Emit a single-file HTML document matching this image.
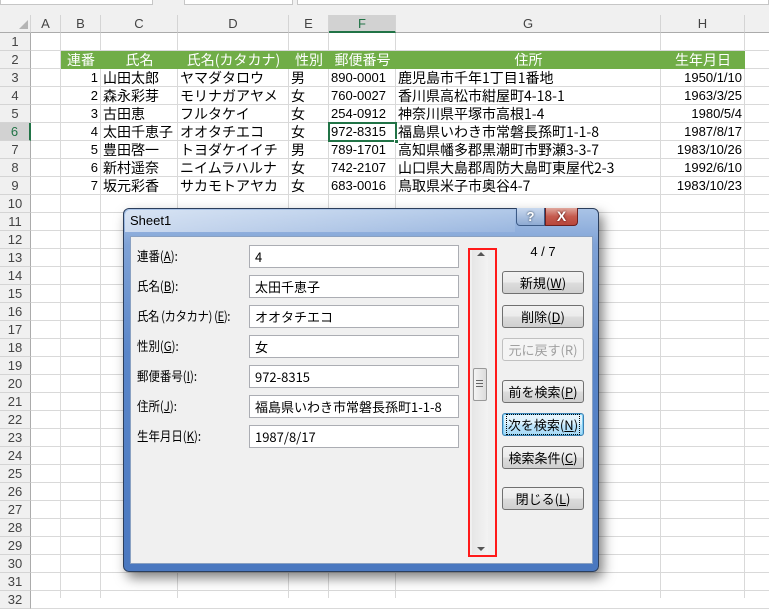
<!DOCTYPE html>
<html><head><meta charset="utf-8"><style>
*{box-sizing:border-box;margin:0;padding:0}
body{width:769px;height:598px;overflow:hidden;background:#fff;position:relative;font-family:"Liberation Sans","Noto Sans CJK JP",sans-serif;}
.a{position:absolute}
.top{left:0;top:0;width:769px;height:15px;background:#f0f0f0}
.hdr{top:15px;height:18px;background:#f0f0f0;border-right:1px solid #d4d4d4;border-bottom:1px solid #ababab;font-size:13px;color:#444;text-align:center;line-height:18px}
.rh{left:0;width:31px;height:18px;background:#f0f0f0;border-bottom:1px solid #d4d4d4;border-right:1px solid #ababab;font-size:13px;color:#444;text-align:center;line-height:18px}
.vl{top:33px;width:1px;height:565px;background:#d9d9d9}
.hl{left:31px;width:738px;height:1px;background:#d9d9d9}
.c{height:18px;font-size:14px;line-height:18px;white-space:nowrap;color:#000;font-family:"Noto Sans CJK JP","Liberation Sans",sans-serif}
.g{background:#70ad47;color:#fff;text-align:center}
.d{font-size:13px;font-family:"Liberation Sans","Noto Sans CJK JP",sans-serif}
.lab{left:137px;font-size:13px;font-family:"Noto Sans CJK JP",sans-serif;color:#000;line-height:22px;white-space:nowrap;transform:scaleX(0.88);transform-origin:left center}
.in{left:249px;width:210px;height:23px;background:#fff;border:1px solid #abadb3;font-size:13px;padding-left:5px;line-height:21px;font-family:"Noto Sans CJK JP",sans-serif;white-space:nowrap}
.b{left:502px;width:82px;height:23px;border:1px solid #707070;border-radius:3px;background:linear-gradient(#f2f2f2,#ebebeb 50%,#dddddd 51%,#cfcfcf);font-size:13px;text-align:center;line-height:21px;font-family:"Noto Sans CJK JP",sans-serif;color:#000}
u{text-decoration:underline}
</style></head><body>
<div class="a top"></div>
<div class="a" style="left:0;top:0;width:153px;height:5px;border:1px solid #c6c6c6;border-top:0;background:#fff"></div>
<div class="a" style="left:184px;top:0;width:109px;height:5px;border:1px solid #c6c6c6;border-top:0;background:#fff"></div>
<div class="a" style="left:297px;top:0;width:472px;height:5px;border:1px solid #c6c6c6;border-top:0;background:#fff"></div>
<div class="a hdr" style="left:0;width:31px"></div>
<div class="a" style="left:19px;top:20px;width:0;height:0;border-left:9px solid transparent;border-bottom:9px solid #b4b4b4"></div>
<div class="a hdr" style="left:31px;width:30px">A</div>
<div class="a hdr" style="left:61px;width:40px">B</div>
<div class="a hdr" style="left:101px;width:77px">C</div>
<div class="a hdr" style="left:178px;width:111px">D</div>
<div class="a hdr" style="left:289px;width:40px">E</div>
<div class="a hdr" style="left:329px;width:67px;background:#d2d2d2;color:#217346;border-bottom:2px solid #217346">F</div>
<div class="a hdr" style="left:396px;width:265px">G</div>
<div class="a hdr" style="left:661px;width:84px">H</div>
<div class="a hdr" style="left:745px;width:24px;border-right:0"></div>
<div class="a vl" style="left:60px"></div><div class="a vl" style="left:100px"></div><div class="a vl" style="left:177px"></div><div class="a vl" style="left:288px"></div><div class="a vl" style="left:328px"></div><div class="a vl" style="left:395px"></div><div class="a vl" style="left:660px"></div><div class="a vl" style="left:744px"></div>
<div id="rows"></div>
<script>
var h='';for(var i=1;i<=32;i++){var t=33+(i-1)*18;h+='<div class="a rh" style="top:'+t+'px;'+(i==6?'background:#d2d2d2;color:#217346;border-right:2px solid #217346':'')+'">'+i+'</div><div class="a hl" style="top:'+(t+17)+'px"></div>';}
document.getElementById('rows').innerHTML=h;
</script>
<div class="a c g" style="left:61px;top:51px;width:40px">連番</div>
<div class="a c g" style="left:101px;top:51px;width:77px">氏名</div>
<div class="a c g" style="left:178px;top:51px;width:111px">氏名(カタカナ)</div>
<div class="a c g" style="left:289px;top:51px;width:40px">性別</div>
<div class="a c g" style="left:329px;top:51px;width:67px">郵便番号</div>
<div class="a c g" style="left:396px;top:51px;width:265px">住所</div>
<div class="a c g" style="left:661px;top:51px;width:84px">生年月日</div>
<div id="data"></div>
<script>
var D=[["1","山田太郎","ヤマダタロウ","男","890-0001","鹿児島市千年1丁目1番地","1950/1/10"],
["2","森永彩芽","モリナガアヤメ","女","760-0027","香川県高松市紺屋町4-18-1","1963/3/25"],
["3","古田恵","フルタケイ","女","254-0912","神奈川県平塚市高根1-4","1980/5/4"],
["4","太田千恵子","オオタチエコ","女","972-8315","福島県いわき市常磐長孫町1-1-8","1987/8/17"],
["5","豊田啓一","トヨダケイイチ","男","789-1701","高知県幡多郡黒潮町市野瀬3-3-7","1983/10/26"],
["6","新村遥奈","ニイムラハルナ","女","742-2107","山口県大島郡周防大島町東屋代2-3","1992/6/10"],
["7","坂元彩香","サカモトアヤカ","女","683-0016","鳥取県米子市奥谷4-7","1983/10/23"]];
var s='';D.forEach(function(r,i){var t=69+i*18;
s+='<div class="a c d" style="left:61px;top:'+t+'px;width:37px;text-align:right">'+r[0]+'</div>';
s+='<div class="a c" style="left:103px;top:'+t+'px">'+r[1]+'</div>';
s+='<div class="a c" style="left:180px;top:'+t+'px">'+r[2]+'</div>';
s+='<div class="a c" style="left:291px;top:'+t+'px">'+r[3]+'</div>';
s+='<div class="a c d" style="left:331px;top:'+t+'px">'+r[4]+'</div>';
s+='<div class="a c" style="left:398px;top:'+t+'px">'+r[5]+'</div>';
s+='<div class="a c d" style="left:661px;top:'+t+'px;width:81px;text-align:right">'+r[6]+'</div>';});
document.getElementById('data').innerHTML=s;
</script>
<div class="a" style="left:328px;top:122px;width:69px;height:20px;border:2px solid #217346"></div>
<div class="a" style="left:394px;top:139px;width:5px;height:5px;background:#217346;border:1px solid #fff"></div>
<!-- dialog -->
<div class="a" style="left:123px;top:208px;width:476px;height:364px;border-radius:6px;background:linear-gradient(#a9c3e6,#7fa2d6 10%,#5a86c9 40%,#4a78c0);border:1px solid #2b3e5c;box-shadow:4px 6px 12px rgba(0,0,0,.5)"></div>
<div class="a" style="left:125px;top:210px;width:390px;height:22px;background:linear-gradient(90deg,rgba(255,255,255,.55),rgba(255,255,255,.1));border-radius:5px 0 0 0"></div>
<div class="a" style="left:130px;top:213px;font-size:13px;color:#000">Sheet1</div>
<div class="a" style="left:516px;top:208px;width:29px;height:18px;border:1px solid #3c5a86;border-top:0;border-radius:0 0 0 4px;background:linear-gradient(#c8d8ee,#8eaad3);color:#fff;font-weight:bold;font-size:13px;text-align:center;line-height:17px;text-shadow:0 0 2px #234">?</div>
<div class="a" style="left:545px;top:208px;width:33px;height:18px;border:1px solid #6b2020;border-top:0;border-radius:0 0 4px 0;background:linear-gradient(#e0a89e,#c55a4e 50%,#b8463a);color:#fff;font-weight:bold;font-size:14px;text-align:center;line-height:17px;text-shadow:0 0 2px #400">X</div>
<div class="a" style="left:130px;top:236px;width:463px;height:328px;background:#f0f0f0;border:1px solid #8aa1c2"></div>
<div class="a lab" style="top:245px">連番(<u>A</u>):</div>
<div class="a lab" style="top:275px">氏名(<u>B</u>):</div>
<div class="a lab" style="top:305px;letter-spacing:-0.5px">氏名 (カタカナ) (<u>E</u>):</div>
<div class="a lab" style="top:335px">性別(<u>G</u>):</div>
<div class="a lab" style="top:365px">郵便番号(<u>I</u>):</div>
<div class="a lab" style="top:395px">住所(<u>J</u>):</div>
<div class="a lab" style="top:425px">生年月日(<u>K</u>):</div>
<div class="a in" style="top:245px">4</div>
<div class="a in" style="top:275px">太田千恵子</div>
<div class="a in" style="top:305px">オオタチエコ</div>
<div class="a in" style="top:335px">女</div>
<div class="a in" style="top:365px">972-8315</div>
<div class="a in" style="top:395px">福島県いわき市常磐長孫町1-1-8</div>
<div class="a in" style="top:425px">1987/8/17</div>
<div class="a" style="left:472px;top:250px;width:16px;height:304px;background:linear-gradient(90deg,#e6e6e6,#f3f3f3)"></div>
<div class="a" style="left:477px;top:252px;width:0;height:0;border-left:4px solid transparent;border-right:4px solid transparent;border-bottom:4px solid #555"></div>
<div class="a" style="left:477px;top:547px;width:0;height:0;border-left:4px solid transparent;border-right:4px solid transparent;border-top:4px solid #555"></div>
<div class="a" style="left:473px;top:368px;width:14px;height:33px;border:1px solid #999;border-radius:2px;background:linear-gradient(90deg,#f4f4f4,#dcdcdc)"></div>
<div class="a" style="left:476px;top:380px;width:7px;height:7px;border-top:1px solid #666;border-bottom:1px solid #666"><div style="margin-top:2px;height:1px;background:#666"></div></div>
<div class="a" style="left:468px;top:248px;width:29px;height:309px;border:2px solid #ff1a1a"></div>
<div class="a" style="left:502px;top:244px;width:82px;text-align:center;font-size:13px;color:#000">4 / 7</div>
<div class="a b" style="top:271px">新規(<u>W</u>)</div>
<div class="a b" style="top:305px">削除(<u>D</u>)</div>
<div class="a b" style="top:338px;color:#a0a0a0;border-color:#c0c0c0;background:#f4f4f4">元に戻す(R)</div>
<div class="a b" style="top:380px">前を検索(<u>P</u>)</div>
<div class="a b" style="top:413px;border-color:#3c7fb1;box-shadow:inset 0 0 0 1px #7fd0f5;background:linear-gradient(#eaf6fd,#d9f0fc 50%,#bee6fd 51%,#a7d9f5)"><span style="outline:1px dotted #000;padding:0 1px">次を検索(<u>N</u>)</span></div>
<div class="a b" style="top:446px">検索条件(<u>C</u>)</div>
<div class="a b" style="top:487px">閉じる(<u>L</u>)</div>
</body></html>
